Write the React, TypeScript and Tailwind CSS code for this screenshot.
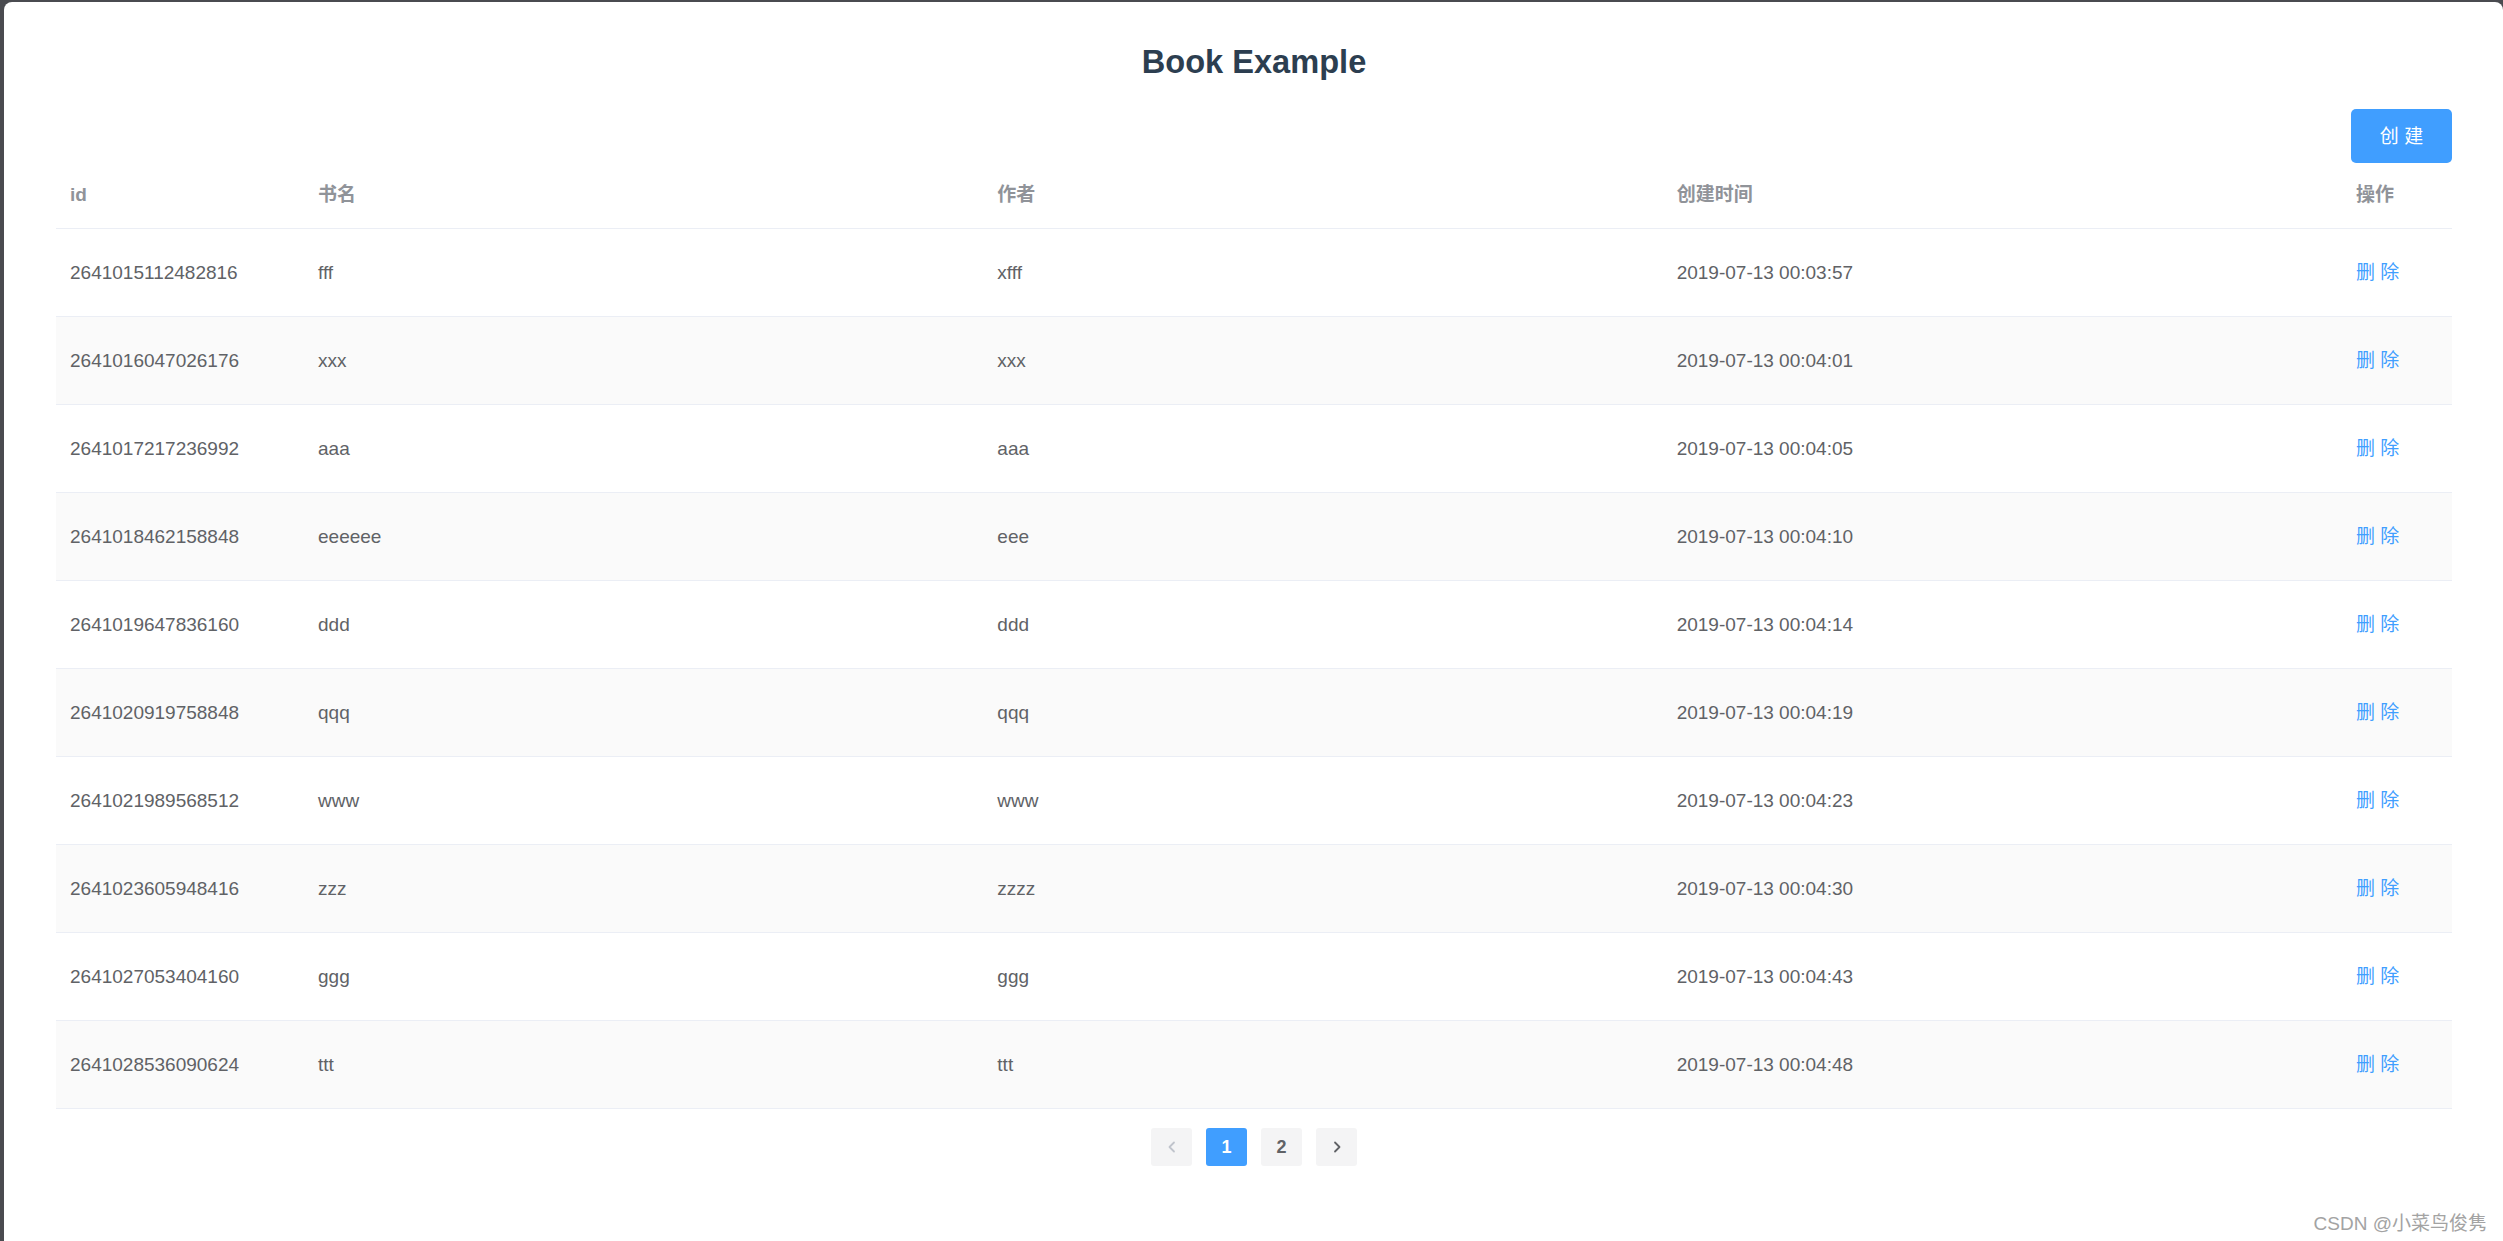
const books = [
  { id: "2641015112482816", name: "fff", author: "xfff", time: "2019-07-13 00:03:57" },
  { id: "2641016047026176", name: "xxx", author: "xxx", time: "2019-07-13 00:04:01" },
  { id: "2641017217236992", name: "aaa", author: "aaa", time: "2019-07-13 00:04:05" },
  { id: "2641018462158848", name: "eeeeee", author: "eee", time: "2019-07-13 00:04:10" },
  { id: "2641019647836160", name: "ddd", author: "ddd", time: "2019-07-13 00:04:14" },
  { id: "2641020919758848", name: "qqq", author: "qqq", time: "2019-07-13 00:04:19" },
  { id: "2641021989568512", name: "www", author: "www", time: "2019-07-13 00:04:23" },
  { id: "2641023605948416", name: "zzz", author: "zzzz", time: "2019-07-13 00:04:30" },
  { id: "2641027053404160", name: "ggg", author: "ggg", time: "2019-07-13 00:04:43" },
  { id: "2641028536090624", name: "ttt", author: "ttt", time: "2019-07-13 00:04:48" },
];

const cols = "grid grid-cols-[248px_1fr_1fr_1fr_110px]";

function Chevron({ dir }: { dir: "left" | "right" }) {
  return (
    <svg width="14" height="14" viewBox="0 0 14 14">
      <path
        d={dir === "left" ? "M9 2.5 L4.5 7 L9 11.5" : "M5 2.5 L9.5 7 L5 11.5"}
        fill="none"
        stroke="currentColor"
        strokeWidth="1.8"
        strokeLinecap="round"
        strokeLinejoin="round"
      />
    </svg>
  );
}

export default function App() {
  return (
    <div className="h-[1241px] bg-[#4a4b50] pt-[2px] pl-[4px] overflow-hidden font-['Liberation_Sans','Noto_Sans_CJK_SC',sans-serif]">
      <div className="relative h-[1239px] bg-white rounded-t-[8px] pl-[52px] pr-[51px]">
        {/* Title */}
        <h1 className="pt-[40px] h-[80px] leading-[40px] text-center text-[32.6px] font-bold text-[#2c3e50]">
          Book Example
        </h1>

        {/* Toolbar */}
        <div className="mt-[27px] flex justify-end">
          <button className="w-[101px] h-[54px] rounded-[5px] bg-[#409eff] text-white text-[19px] leading-none">
            创 建
          </button>
        </div>

        {/* Table */}
        <div className="text-[19px]">
          <div className={`${cols} h-[66px] border-b border-[#ebeef5] items-center font-bold text-[#909399]`}>
            <div className="px-[14px]">id</div>
            <div className="px-[14px]">书名</div>
            <div className="px-[14px]">作者</div>
            <div className="px-[14px]">创建时间</div>
            <div className="px-[14px]">操作</div>
          </div>
          {books.map((b, i) => (
            <div
              key={b.id}
              className={`${cols} h-[88px] pt-[2px] border-b border-[#ebeef5] items-center text-[#606266] ${
                i % 2 === 1 ? "bg-[#fafafa]" : "bg-white"
              }`}
            >
              <div className="px-[14px]">{b.id}</div>
              <div className="px-[14px]">{b.name}</div>
              <div className="px-[14px]">{b.author}</div>
              <div className="px-[14px]">{b.time}</div>
              <div className="px-[14px] text-[#409eff]">删 除</div>
            </div>
          ))}
        </div>

        {/* Pagination */}
        <div className="mt-[19px] flex justify-center gap-[14px] text-[18px] font-bold">
          <div className="w-[41px] h-[38px] rounded-[3px] bg-[#f4f4f5] flex items-center justify-center text-[#c0c4cc]">
            <Chevron dir="left" />
          </div>
          <div className="w-[41px] h-[38px] rounded-[3px] bg-[#409eff] flex items-center justify-center text-white">
            1
          </div>
          <div className="w-[41px] h-[38px] rounded-[3px] bg-[#f4f4f5] flex items-center justify-center text-[#606266]">
            2
          </div>
          <div className="w-[41px] h-[38px] rounded-[3px] bg-[#f4f4f5] flex items-center justify-center text-[#606266]">
            <Chevron dir="right" />
          </div>
        </div>

        {/* Watermark */}
        <div className="absolute right-[16px] bottom-[6px] text-[19px] leading-[22px] text-[#a3a3a3]">
          CSDN @小菜鸟俊隽
        </div>
      </div>
    </div>
  );
}
